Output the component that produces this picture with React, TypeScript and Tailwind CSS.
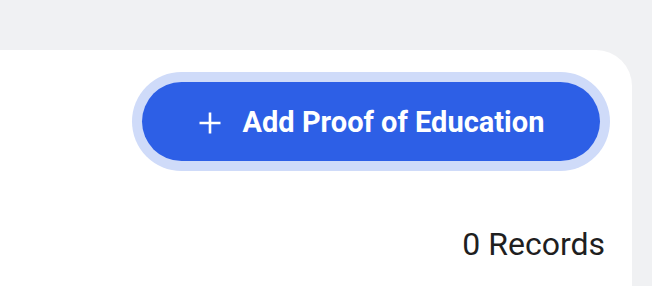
export default function App() {
  return (
    <div className="min-h-[286px] w-[652px] bg-[#f0f1f3] pt-[50px] pr-[20px] overflow-hidden font-['Roboto',sans-serif]">
      <div className="bg-white rounded-tr-[36px] h-[236px] px-[32px] pt-[32px] flex flex-col items-end">
        <button className="h-[79px] w-[458px] pt-[2px] rounded-full bg-[#2d5fe6] ring-[10px] ring-[#cfdbf9] text-white flex items-center justify-center gap-[21px]">
          <svg width="24" height="24" viewBox="0 0 24 24" fill="none" stroke="currentColor" strokeWidth="2.6" strokeLinecap="butt">
            <path d="M12 1.5v21M1.5 12h21" />
          </svg>
          <span className="text-[29px] font-bold">Add Proof of Education</span>
        </button>
        <p className="mt-[65px] mr-[-5px] text-[32px] leading-[36px] text-[#1f1f1f]">0 Records</p>
      </div>
    </div>
  );
}
